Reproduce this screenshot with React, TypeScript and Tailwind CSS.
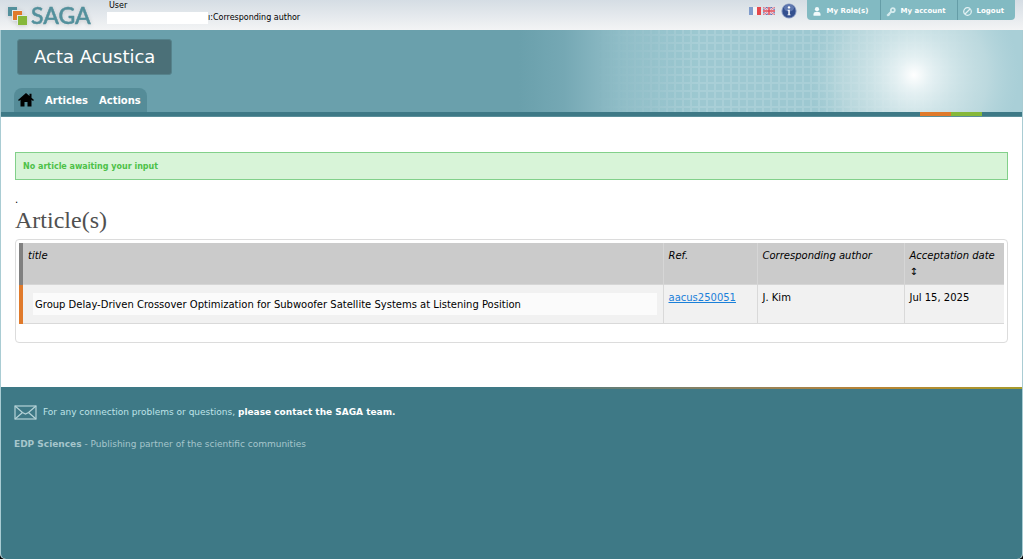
import React from "react";

function Logo() {
  return (
    <a href="#home" aria-label="SAGA" className="flex items-start pl-2">
      <svg width="84" height="30" viewBox="0 0 84 30" className="drop-shadow-sm">
        <rect x="0" y="7" width="9" height="9" fill="#53909c" />
        <rect x="4" y="10" width="10" height="11" fill="#e4eaee" />
        <rect x="5" y="11" width="9" height="9" fill="#e07a2b" />
        <rect x="9" y="15" width="10" height="10" fill="#e4eaee" />
        <rect x="10" y="16" width="9" height="9" fill="#86b83a" />
        <text x="23" y="24" fontSize="23" fontWeight="500" fill="#53909c" stroke="#53909c" strokeWidth="0.500" className="font-['Lato',sans-serif]">
          SAGA
        </text>
      </svg>
    </a>
  );
}

function Flags() {
  return (
    <div className="flex gap-[2px]">
      <button type="button" aria-label="Français">
        <svg width="12" height="8" viewBox="0 0 12 8">
          <rect width="12" height="8" fill="#f4f4f6" />
          <rect width="4" height="8" fill="#7f9ccb" />
          <rect x="8" width="4" height="8" fill="#e5484c" />
        </svg>
      </button>
      <button type="button" aria-label="English">
        <svg width="12" height="8" viewBox="0 0 12 8">
          <rect width="12" height="8" fill="#5f6bad" />
          <path d="M0 0l12 8M12 0L0 8" stroke="#f6e9ee" strokeWidth="2.200" />
          <path d="M0 0l12 8M12 0L0 8" stroke="#dd6a78" strokeWidth="1" />
          <path d="M6 0v8M0 4h12" stroke="#f8eef2" strokeWidth="2.600" />
          <path d="M6 0v8M0 4h12" stroke="#dc4452" strokeWidth="1.500" />
        </svg>
      </button>
    </div>
  );
}

function InfoIcon() {
  return (
    <svg width="16" height="16" viewBox="0 0 16 16">
      <circle cx="8" cy="8" r="7.6" fill="#8d9ec4" />
      <circle cx="8" cy="8" r="6.6" fill="#34508f" />
      <ellipse cx="8" cy="5" rx="5" ry="3.4" fill="#5f78b0" />
      <circle cx="8" cy="4.4" r="1.2" fill="#fff" />
      <path d="M6.6 6.8h2.2v4.6h.8v.9H6.5v-.9h.8V7.7h-.7z" fill="#fff" />
    </svg>
  );
}

const userIcon = (
  <svg width="8" height="9" viewBox="0 0 8 9" fill="#f2fafb">
    <circle cx="4" cy="2.2" r="2.1" />
    <path d="M.5 8.800V7.200C.5 5.600 2 4.800 4 4.800s3.500.8 3.500 2.400v1.600z" />
  </svg>
);

const keyIcon = (
  <svg width="10" height="10" viewBox="0 0 10 10" fill="none" stroke="#d5ebee">
    <circle cx="6.800" cy="3.200" r="2" strokeWidth="1.800" />
    <path d="M5.200 4.800L1.200 8.800M2.600 7.400l1 1" strokeWidth="2" />
  </svg>
);

const logoutIcon = (
  <svg width="9" height="9" viewBox="0 0 9 9" fill="none" stroke="#e3f2f4" strokeWidth="1.200">
    <circle cx="4.500" cy="4.500" r="3.800" />
    <path d="M2 7l5-5" />
  </svg>
);

function TopBar() {
  return (
    <div className="flex h-[30px] items-start bg-linear-to-b from-[#d5dde4] to-[#f3f4f5]">
      <Logo />
      <div className="ml-[15px] flex-1 text-[8px] leading-3">
        <div className="px-[2px]">User</div>
        <div className="flex items-center">
          <span className="h-3 w-[101px] bg-white" />
          <span>ı:Corresponding author</span>
        </div>
      </div>
      <div className="flex h-[22px] items-center gap-[6px] pr-[10px]">
        <Flags />
        <button type="button" aria-label="Information">
          <InfoIcon />
        </button>
      </div>
      <nav className="mr-2 flex h-5 overflow-hidden rounded-b bg-[#82bac2] text-[7px] font-bold text-white">
        <a href="#roles" className="flex items-center gap-[6px] pl-[6px] pr-3 pt-[3px]">
          {userIcon}
          My Role(s)
        </a>
        <a href="#account" className="flex items-center gap-1 border-l border-[#659da7] pl-[5px] pr-[11px] pt-[3px]">
          {keyIcon}
          My account
        </a>
        <a href="#logout" className="flex items-center gap-[5px] border-l border-[#659da7] pl-[5px] pr-[11px] pt-[3px]">
          {logoutIcon}
          Logout
        </a>
      </nav>
    </div>
  );
}

function BannerArt() {
  return (
    <svg className="absolute right-0 top-0" width="503" height="82" viewBox="520 30 503 82" aria-hidden="true">
      <defs>
        <linearGradient id="fade" x1="520" x2="700" y1="0" y2="0" gradientUnits="userSpaceOnUse">
          <stop offset="0" stopColor="#6aa0ac" />
          <stop offset="0.250" stopColor="#75a8b4" />
          <stop offset="0.550" stopColor="#90bdc7" />
          <stop offset="1" stopColor="#a9cfd7" />
        </linearGradient>
        <radialGradient id="glow" cx="915" cy="75" r="105" gradientUnits="userSpaceOnUse">
          <stop offset="0" stopColor="#fff" />
          <stop offset="0.150" stopColor="#f2f8f9" stopOpacity="0.850" />
          <stop offset="0.400" stopColor="#dfedef" stopOpacity="0.700" />
          <stop offset="0.700" stopColor="#cfe3e6" stopOpacity="0.500" />
          <stop offset="1" stopColor="#bcdadf" stopOpacity="0" />
        </radialGradient>
        <linearGradient id="gridFade" x1="600" x2="980" y1="0" y2="0" gradientUnits="userSpaceOnUse">
          <stop offset="0" stopColor="#fff" stopOpacity="0" />
          <stop offset="0.200" stopColor="#fff" />
          <stop offset="0.600" stopColor="#fff" />
          <stop offset="1" stopColor="#fff" stopOpacity="0" />
        </linearGradient>
        <pattern id="squares" x="5" y="4" width="8" height="8" patternUnits="userSpaceOnUse">
          <rect width="6" height="6" fill="#82b9c5" fillOpacity="0.300" />
        </pattern>
        <mask id="gridMask">
          <rect x="600" y="30" width="380" height="82" fill="url(#gridFade)" />
        </mask>
      </defs>
      <rect x="520" y="30" width="503" height="82" fill="url(#fade)" />
      <rect x="600" y="30" width="380" height="82" fill="url(#squares)" mask="url(#gridMask)" />
      <circle cx="915" cy="75" r="105" fill="url(#glow)" />
    </svg>
  );
}

function Banner() {
  return (
    <header className="relative flex flex-col items-start bg-[#6aa0ac] pt-[9px]">
      <BannerArt />
      <h1 className="relative ml-4 rounded-[3px] border border-[#56838c] bg-[#4b7078] px-4 text-[18px] leading-[34px] text-white">
        Acta Acustica
      </h1>
      <nav className="relative ml-[13px] mt-[13px] flex h-6 items-center gap-[11px] rounded-t-lg bg-[#558c98] pl-1 pr-[6px] text-[10px] font-bold text-white">
        <a href="#home" aria-label="Home">
          <svg width="16" height="14" viewBox="0 0 16 14" fill="#000">
            <path d="M8 0L0 7l1 1 1.500-1.200V13.500h4V9h3v4.500h4V6.800L15 8l1-1-2.500-2.300V.8h-2v2.200z" />
          </svg>
        </a>
        <a href="#articles">Articles</a>
        <a href="#actions">Actions</a>
      </nav>
    </header>
  );
}

function ArticleTable() {
  return (
    <div className="rounded border border-[#dcdcdc] p-[3px] pb-[18px]">
      <table className="w-full table-fixed border-collapse text-left text-[10px] leading-4">
        <colgroup>
          <col />
          <col className="w-[94px]" />
          <col className="w-[147px]" />
          <col className="w-[100px]" />
        </colgroup>
        <thead>
          <tr className="h-[41px] border-b border-[#d6d6d6] bg-[#cbcbcb] align-top italic">
            <th className="border-l-4 border-[#808080] px-[5px] pt-[5px] font-normal">title</th>
            <th className="border-l border-[#d6d6d6] px-[5px] pt-[5px] font-normal">Ref.</th>
            <th className="border-l border-[#d6d6d6] px-[5px] pt-[5px] font-normal">Corresponding author</th>
            <th className="border-l border-[#d6d6d6] pl-[5px] pt-[5px] font-normal">
              Acceptation date
              <button type="button" aria-label="Sort by date" className="block text-[10px] italic leading-4">
                ↕
              </button>
            </th>
          </tr>
        </thead>
        <tbody>
          <tr className="h-[39px] border-b border-[#d9d9d9] bg-[#f1f1f1] align-top">
            <td className="border-l-4 border-[#e07a2b] px-[6px] py-2">
              <div className="ml-1 bg-[#fbfbfb] px-[2px] pb-[2px] pt-1">
                Group Delay-Driven Crossover Optimization for Subwoofer Satellite Systems at Listening Position
              </div>
            </td>
            <td className="border-l border-[#d9d9d9] px-[5px] pt-[5px]">
              <a href="#aacus250051" className="text-[#1a80d9] underline">
                aacus250051
              </a>
            </td>
            <td className="border-l border-[#d9d9d9] px-[5px] pt-[5px]">J. Kim</td>
            <td className="border-l border-[#d9d9d9] px-[5px] pt-[5px]">Jul 15, 2025</td>
          </tr>
        </tbody>
      </table>
    </div>
  );
}

function Footer() {
  return (
    <footer className="flex-1 rounded-b-[5px] bg-[#3e7986] text-[9px] leading-3">
      <div className="h-[2px] bg-linear-to-r from-[#3e7986] from-50% via-[#b88334] via-85% to-[#a69b2c]" />
      <div className="flex items-center gap-[6px] px-[13px] pt-4 text-[#bfe3e8]">
        <svg width="23" height="15" viewBox="0 0 23 15" fill="none" stroke="#b5d2d7" strokeWidth="1.200">
          <rect x="1" y="1" width="21" height="13" />
          <path d="M1 1l7.500 6.500L11.500 9l3-1.500L22 1M1 14l7.500-6.500M22 14l-7.500-6.500" />
        </svg>
        <p>
          For any connection problems or questions,{" "}
          <a href="#contact" className="font-bold text-white">
            please contact the SAGA team.
          </a>
        </p>
      </div>
      <p className="px-[13px] pt-[18px] text-[#a6c6cc]">
        <strong>EDP Sciences</strong> - Publishing partner of the scientific communities
      </p>
    </footer>
  );
}

export default function App() {
  return (
    <div className="flex min-h-screen flex-col bg-black font-['Verdana','DejaVu_Sans',sans-serif] text-black">
      <TopBar />
      <div className="flex flex-1 flex-col rounded-b-[5px] border-x border-[#a9ccd3] bg-white">
        <Banner />
        <div className="flex h-[5px] justify-end border-b border-[#5b8f9a] bg-[#3e7986] pr-10">
          <span className="w-[31px] bg-[#e07a2b]" />
          <span className="w-[31px] bg-[#86b83a]" />
        </div>
        <main className="px-[14px] pb-11 pt-[35px]">
          <p className="border border-[#82d08a] bg-[#d8f4d8] px-[7px] pb-[6px] pt-2 text-[8px] font-bold leading-3 text-[#4dc148]">
            No article awaiting your input
          </p>
          <p className="mt-[14px] text-[10px] leading-3">.</p>
          <h2 className="mb-[5px] font-['Georgia','Liberation_Serif',serif] text-[24px] leading-7 text-[#505050]">
            Article(s)
          </h2>
          <ArticleTable />
        </main>
        <Footer />
      </div>
    </div>
  );
}
